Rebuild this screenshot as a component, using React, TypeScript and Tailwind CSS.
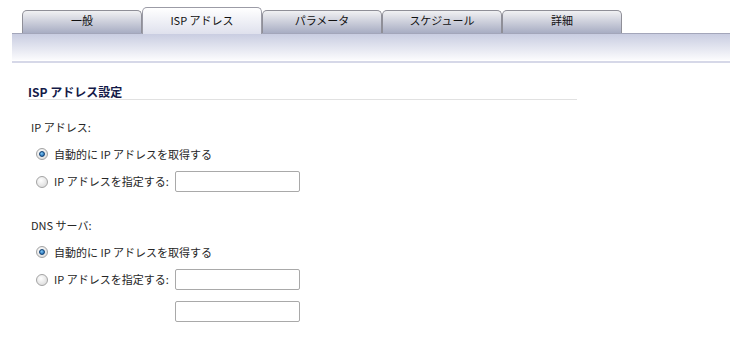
const tabs = ['一般', 'ISP アドレス', 'パラメータ', 'スケジュール', '詳細'];

function Radio({ checked }: { checked?: boolean }) {
  return (
    <span className="relative flex h-[12px] w-[12px] shrink-0 items-center justify-center rounded-full border border-[#a3a3a3] bg-[radial-gradient(circle_at_40%_35%,#ffffff,#d4d4d4)]">
      {checked && (
        <span className="h-[6px] w-[6px] rounded-full border border-[#0d3f73] bg-[radial-gradient(circle_at_40%_35%,#7cc4f4,#125ea8)]" />
      )}
    </span>
  );
}

function TextBox() {
  return <div className="h-[21px] w-[125px] rounded-[2px] border border-[#a9a9a9] bg-white" />;
}

function AddressGroup({ label, extra }: { label: string; extra?: boolean }) {
  return (
    <div>
      <div className="ml-[3px] h-[14px] leading-[14px]">{label}</div>
      <div className="ml-[8px] mt-[13px] flex h-[14px] items-center gap-[6px] leading-[14px]">
        <Radio checked />
        <span>自動的に IP アドレスを取得する</span>
      </div>
      <div className="ml-[8px] mt-[10px] flex h-[21px] items-center gap-[6px]">
        <Radio />
        <span className="w-[115px]">IP アドレスを指定する:</span>
        <TextBox />
      </div>
      {extra && (
        <div className="ml-[147px] mt-[11px]">
          <TextBox />
        </div>
      )}
    </div>
  );
}

export default function App() {
  return (
    <div
      className="h-[363px] w-[738px] overflow-hidden bg-white text-[11px] text-[#262626]"
      style={{ fontFamily: '"Noto Sans CJK JP", "Noto Sans", sans-serif' }}
    >
      <div className="flex h-[33px] items-end pl-[22px]">
        {tabs.map((t, i) =>
          i === 1 ? (
            <div
              key={t}
              className="relative z-10 -mb-px h-[27px] w-[120px] rounded-t-[5px] border border-b-0 border-[#9b9ba6] bg-gradient-to-b from-white to-[#dfe1ed] pt-[4px] text-center text-[11px] leading-[16px] text-[#111]"
            >
              {t}
            </div>
          ) : (
            <div
              key={t}
              className="h-[23px] w-[120px] rounded-t-[5px] border border-b-0 border-[#8f8f98] bg-gradient-to-b from-[#f1f1f3] to-[#a8adc3] pt-[1px] text-center text-[11px] leading-[16px] text-[#111]"
            >
              {t}
            </div>
          )
        )}
      </div>
      <div className="ml-[12px] h-[27px] w-[718px] border-t border-[#a3a6ba] bg-gradient-to-b from-[#c9cde1] to-[#fbfbfd]" />
      <div className="ml-[12px] mt-px h-[2px] w-[718px] bg-[#d6d8e8]" />

      <div className="pl-[28px]">
        <div className="mt-[21px] h-[16px] w-[549px] border-b border-[#e1e1e1] text-[12px] font-bold leading-[15px] text-[#141a48]">
          ISP アドレス設定
        </div>
        <div className="mt-[20px]">
          <AddressGroup label="IP アドレス:" />
        </div>
        <div className="mt-[26px]">
          <AddressGroup label="DNS サーバ:" extra />
        </div>
      </div>
    </div>
  );
}
